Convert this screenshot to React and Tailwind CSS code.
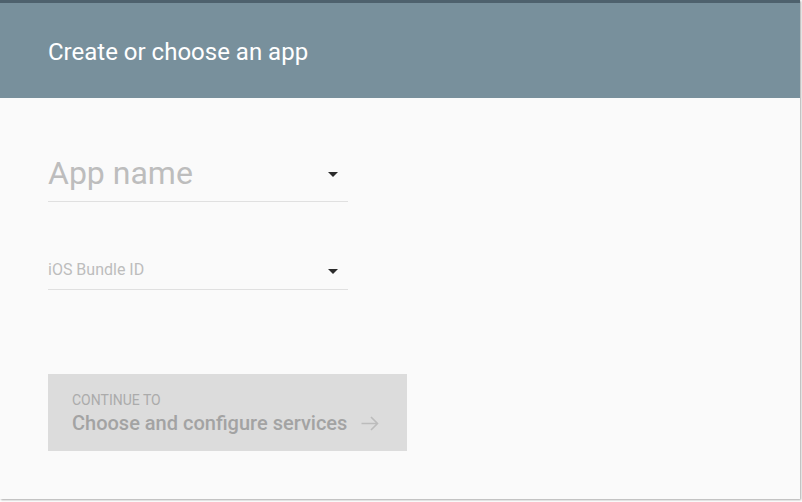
import React from "react";

function Caret() {
  return (
    <svg width="10" height="5" viewBox="0 0 10 5" className="block">
      <path d="M0 0 L10 0 L5 5 Z" fill="#2b2b2b" />
    </svg>
  );
}

export default function App() {
  return (
    <div
      className="w-[802px] h-[502px] bg-white"
      style={{ fontFamily: "Roboto, 'Noto Sans', sans-serif" }}
    >
      <div className="w-[800px] h-[499px] bg-[#fafafa] shadow-[1px_1px_2px_rgba(0,0,0,0.35)] flex flex-col">
        <div className="h-[3px] bg-[#4e616d]" />
        <div className="h-[95px] bg-[#78909c] flex items-center px-[48px]">
          <h1 className="text-white text-[24px] leading-none font-normal pt-[2px]">
            Create or choose an app
          </h1>
        </div>
        <div className="flex flex-col px-[48px] pt-[47px]">
          <div className="w-[300px] h-[57px] border-b border-[#e0e0e0] flex items-center justify-between pr-[10px]">
            <span className="text-[32px] leading-[56px] text-[#bdbdbd]">App name</span>
            <div className="pt-[3px]">
              <Caret />
            </div>
          </div>
          <div className="w-[300px] h-[40px] mt-[48px] border-b border-[#e0e0e0] flex items-center justify-between pr-[10px]">
            <span className="text-[16px] leading-[39px] text-[#bdbdbd]">iOS Bundle ID</span>
            <div className="pt-[3px]">
              <Caret />
            </div>
          </div>
          <div className="w-[359px] h-[77px] mt-[84px] bg-[#dcdcdc] pl-[24px] pt-[18px] flex flex-col">
            <span className="text-[14px] leading-[17px] text-[#ababab] uppercase">Continue to</span>
            <div className="flex items-center gap-[14px]">
              <span className="text-[20px] leading-[28px] font-medium text-[#a3a3a3]">
                Choose and configure services
              </span>
              <svg width="18" height="15" viewBox="0 0 18 15" className="block">
                <path
                  d="M0.5 7.5 H16.5 M10 1 L16.5 7.5 L10 14"
                  fill="none"
                  stroke="#bcbcbc"
                  strokeWidth="1.6"
                />
              </svg>
            </div>
          </div>
        </div>
      </div>
    </div>
  );
}
